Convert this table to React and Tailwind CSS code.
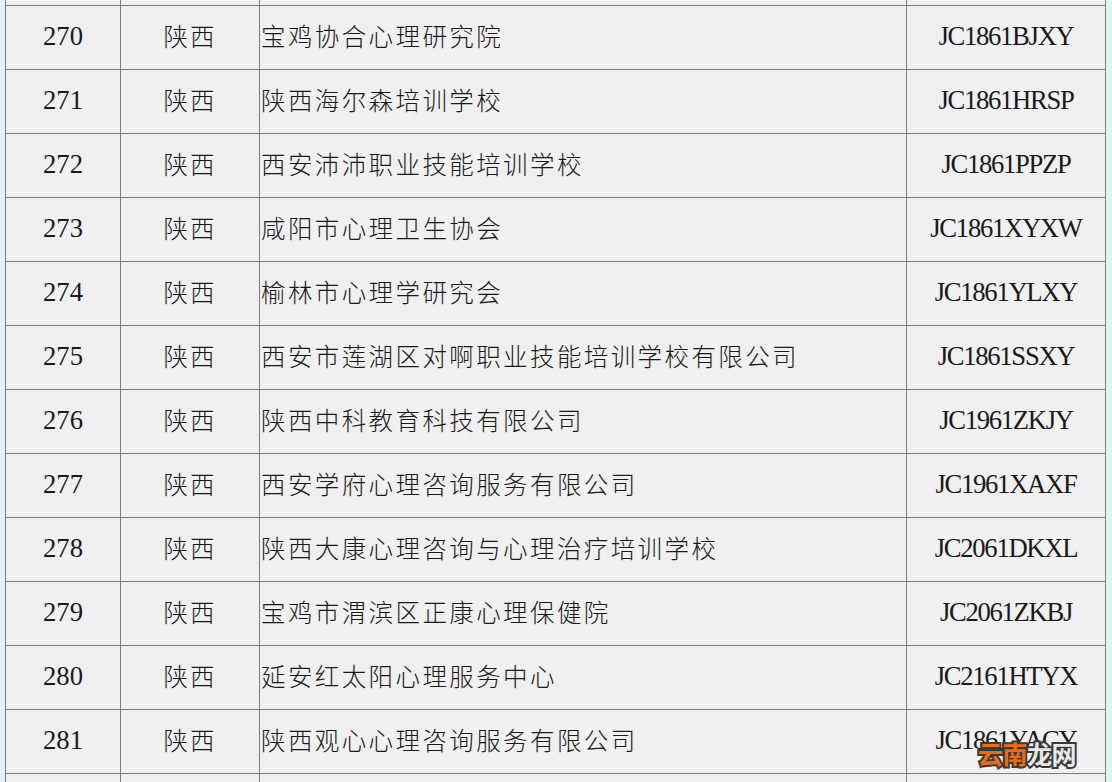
const rows = [
  ["270", "陕西", "宝鸡协合心理研究院", "JC1861BJXY"],
  ["271", "陕西", "陕西海尔森培训学校", "JC1861HRSP"],
  ["272", "陕西", "西安沛沛职业技能培训学校", "JC1861PPZP"],
  ["273", "陕西", "咸阳市心理卫生协会", "JC1861XYXW"],
  ["274", "陕西", "榆林市心理学研究会", "JC1861YLXY"],
  ["275", "陕西", "西安市莲湖区对啊职业技能培训学校有限公司", "JC1861SSXY"],
  ["276", "陕西", "陕西中科教育科技有限公司", "JC1961ZKJY"],
  ["277", "陕西", "西安学府心理咨询服务有限公司", "JC1961XAXF"],
  ["278", "陕西", "陕西大康心理咨询与心理治疗培训学校", "JC2061DKXL"],
  ["279", "陕西", "宝鸡市渭滨区正康心理保健院", "JC2061ZKBJ"],
  ["280", "陕西", "延安红太阳心理服务中心", "JC2161HTYX"],
  ["281", "陕西", "陕西观心心理咨询服务有限公司", "JC1861YACY"],
];

const serif = { fontFamily: '"Liberation Serif", "Noto Sans CJK SC", serif' };
const cjk = { fontFamily: '"Noto Sans CJK SC", "Liberation Serif", sans-serif' };

function Row({ r, last }) {
  return (
    <div className="grid grid-cols-[115px_139px_647px_199px] h-[64px] border-b border-[#7c7c7c]">
      <div className="border-r border-[#7c7c7c] flex items-center justify-center pb-[3px] text-[26.67px] text-[#1a1a1a]" style={serif}>{r[0]}</div>
      <div className="border-r border-[#7c7c7c] flex items-center justify-center pb-[3px] text-[24.5px] tracking-[2px] font-light text-[#1a1a1a]" style={cjk}>{r[1]}</div>
      <div className="border-r border-[#7c7c7c] flex items-center pl-[1px] pb-[3px] text-[24.5px] tracking-[2.4px] font-light text-[#1a1a1a] whitespace-nowrap" style={cjk}>{r[2]}</div>
      <div className="border-r border-[#7c7c7c] flex items-center justify-center pb-[3px] text-[26.67px] tracking-[-1.3px] text-[#1a1a1a] relative" style={serif}>
        {r[3]}
        {last && (
          <span className="absolute left-[71px] top-[31px] text-[25px] font-bold tracking-[-0.5px] leading-none whitespace-nowrap [paint-order:stroke_fill] [-webkit-text-stroke:4px_#3a3a3a]" style={cjk}>
            <span className="text-[#f06a10]">云南</span><span className="text-[#e8e8e8]">龙网</span>
          </span>
        )}
      </div>
    </div>
  );
}

function Strip({ h, top }) {
  return (
    <div className={`grid grid-cols-[115px_139px_647px_199px] ${h} ${top ? "border-b border-[#7c7c7c]" : ""}`}>
      <div className="border-r border-[#7c7c7c]" />
      <div className="border-r border-[#7c7c7c]" />
      <div className="border-r border-[#7c7c7c]" />
      <div className="border-r border-[#7c7c7c]" />
    </div>
  );
}

export default function App() {
  return (
    <div className="w-[1112px] h-[782px] overflow-hidden bg-[#dff3f5] flex">
      <div className="ml-[5px] w-[1101px] h-full bg-[#f0f0f0] border-l border-[#7c7c7c] flex flex-col">
        <Strip h="h-[6px]" top />
        {rows.map((r, i) => (
          <Row key={r[0]} r={r} last={i === rows.length - 1} />
        ))}
        <Strip h="flex-1" />
      </div>
    </div>
  );
}
